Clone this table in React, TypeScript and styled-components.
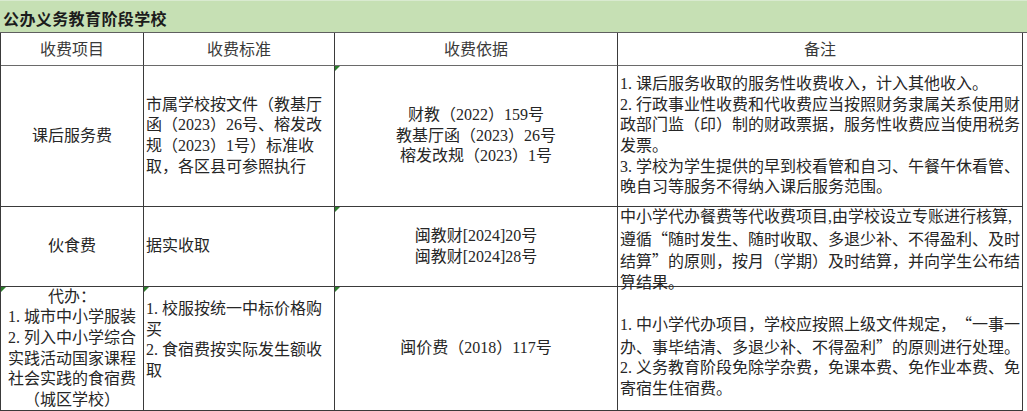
import * as React from 'react';
import styled, { createGlobalStyle, css } from 'styled-components';

const GlobalStyles = createGlobalStyle`
  html, body {
    margin: 0;
    padding: 0;
    background: #ffffff;
  }
  body {
    font-family: "Liberation Serif", "Noto Sans CJK SC", serif;
    font-size: 16px;
    color: #262626;
  }
`;

const Sheet = styled.div`
  width: 1027px;
  height: 411px;
  overflow: hidden;
`;

const TitleBar = styled.div`
  box-sizing: border-box;
  height: 33px;
  display: flex;
  align-items: center;
  padding: 3px 0 0 3px;
  background: #c6e0b4;
  border-top: 1px solid #d9ead0;
  border-bottom: 1px solid #5f5f5f;
  font-family: "Noto Sans CJK SC", sans-serif;
  font-weight: 700;
  font-size: 16px;
  letter-spacing: 0.4px;
  color: #1c1c1c;
`;

const Grid = styled.div`
  display: grid;
  width: 1023px;
  box-sizing: border-box;
  grid-template-columns: 143px 191px 283px 405px;
  grid-template-rows: 33px 141px 80px 124px;
  border-left: 1px solid #3a3a3a;
`;

type Align = 'left' | 'center';

const Cell = styled.div<{ $align?: Align; $top?: number; $flag?: boolean }>`
  position: relative;
  box-sizing: border-box;
  display: flex;
  flex-direction: column;
  justify-content: ${({ $top }) => ($top !== undefined ? 'flex-start' : 'center')};
  align-items: ${({ $align }) => ($align === 'left' ? 'flex-start' : 'center')};
  padding: ${({ $top }) => ($top !== undefined ? `${$top}px` : '0')} 2px 0 2px;
  border-right: 1px solid #3a3a3a;
  border-bottom: 1px solid #3a3a3a;
  line-height: 20.6px;
  ${({ $flag }) =>
    $flag &&
    css`
      &::before {
        content: '';
        position: absolute;
        top: 0;
        left: 0;
        border-top: 5px solid #2d7d2d;
        border-right: 5px solid transparent;
      }
    `}
`;

const HeadCell = styled(Cell)`
  border-bottom-color: #6a6a6a;
  color: #3a3a3a;
  padding-top: 2px;
`;

const Line = styled.div<{ $tight?: boolean }>`
  white-space: nowrap;
`;

const Quote = styled.span<{ $open?: boolean }>`
  display: inline-block;
  width: 1em;
  text-align: ${({ $open }) => ($open ? 'right' : 'left')};
  font-family: "Noto Sans CJK SC", sans-serif;
`;

const renderLine = (text: string) =>
  text.split(/([“”])/).map((part, i) =>
    part === '“' || part === '”' ? (
      <Quote key={i} $open={part === '“'}>
        {part}
      </Quote>
    ) : (
      <React.Fragment key={i}>{part}</React.Fragment>
    ),
  );

const Lines = ({ items }: { items: string[] }) => (
  <>
    {items.map((t, i) => (
      <Line key={i}>{renderLine(t)}</Line>
    ))}
  </>
);

export default function App() {
  return (
    <Sheet>
      <GlobalStyles />
      <TitleBar>公办义务教育阶段学校</TitleBar>
      <Grid>
        <HeadCell>收费项目</HeadCell>
        <HeadCell>收费标准</HeadCell>
        <HeadCell>收费依据</HeadCell>
        <HeadCell>备注</HeadCell>

        <Cell>课后服务费</Cell>
        <Cell $align="left">
          <Lines
            items={[
              '市属学校按文件（教基厅',
              '函（2023）26号、榕发改',
              '规（2023）1号）标准收',
              '取，各区县可参照执行',
            ]}
          />
        </Cell>
        <Cell $flag>
          <Lines items={['财教（2022）159号', '教基厅函（2023）26号', '榕发改规（2023）1号']} />
        </Cell>
        <Cell $align="left">
          <Lines
            items={[
              '1. 课后服务收取的服务性收费收入，计入其他收入。',
              '2. 行政事业性收费和代收费应当按照财务隶属关系使用财',
              '政部门监（印）制的财政票据，服务性收费应当使用税务',
              '发票。',
              '3. 学校为学生提供的早到校看管和自习、午餐午休看管、',
              '晚自习等服务不得纳入课后服务范围。',
            ]}
          />
        </Cell>

        <Cell>伙食费</Cell>
        <Cell $align="left">据实收取</Cell>
        <Cell $flag>
          <Lines items={['闽教财[2024]20号', '闽教财[2024]28号']} />
        </Cell>
        <Cell $align="left" $top={0}>
          <Lines
            items={[
              '中小学代办餐费等代收费项目,由学校设立专账进行核算,',
              '遵循“随时发生、随时收取、多退少补、不得盈利、及时',
              '结算”的原则，按月（学期）及时结算，并向学生公布结',
              '算结果。',
            ]}
          />
        </Cell>

        <Cell $flag>
          <Lines
            items={[
              '代办：',
              '1. 城市中小学服装',
              '2. 列入中小学综合',
              '实践活动国家课程',
              '社会实践的食宿费',
              '（城区学校）',
            ]}
          />
        </Cell>
        <Cell $align="left" $top={12} $flag>
          <Lines items={['1. 校服按统一中标价格购', '买', '2. 食宿费按实际发生额收', '取']} />
        </Cell>
        <Cell $flag>闽价费（2018）117号</Cell>
        <Cell $align="left" $top={26}>
          <Lines
            items={[
              '1. 中小学代办项目，学校应按照上级文件规定，“一事一',
              '办、事毕结清、多退少补、不得盈利”的原则进行处理。',
              '2. 义务教育阶段免除学杂费，免课本费、免作业本费、免',
              '寄宿生住宿费。',
            ]}
          />
        </Cell>
      </Grid>
    </Sheet>
  );
}
